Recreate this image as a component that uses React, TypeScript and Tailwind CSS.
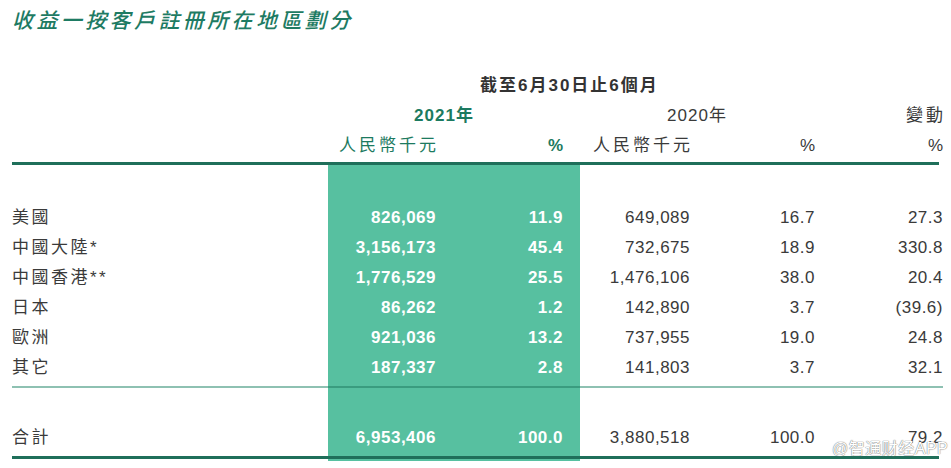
import React from "react";

const GRID = "grid grid-cols-[316px_122px_130px_125px_125px_113px]";
const FONT = "font-['Liberation_Sans','Noto_Sans_CJK_TC',sans-serif]";

type R = { label: string; a: string; b: string; c: string; d: string; e: string };

const rows: R[] = [
  { label: "美國", a: "826,069", b: "11.9", c: "649,089", d: "16.7", e: "27.3" },
  { label: "中國大陸*", a: "3,156,173", b: "45.4", c: "732,675", d: "18.9", e: "330.8" },
  { label: "中國香港**", a: "1,776,529", b: "25.5", c: "1,476,106", d: "38.0", e: "20.4" },
  { label: "日本", a: "86,262", b: "1.2", c: "142,890", d: "3.7", e: "(39.6)" },
  { label: "歐洲", a: "921,036", b: "13.2", c: "737,955", d: "19.0", e: "24.8" },
  { label: "其它", a: "187,337", b: "2.8", c: "141,803", d: "3.7", e: "32.1" },
];

function Spacer({ h }: { h: string }) {
  return (
    <div className={`${GRID} ${h}`}>
      <div />
      <div className="bg-[#57c0a0]" />
      <div className="bg-[#57c0a0]" />
      <div />
      <div />
      <div />
    </div>
  );
}

function DataRow({ r }: { r: R }) {
  return (
    <div className={`${GRID} h-[30px] text-[17px] tracking-[0.5px] text-[#3a3a3a]`}>
      <div className="flex items-center text-[17px] tracking-[2.5px]">{r.label}</div>
      <div className="flex items-center justify-end pr-[14px] bg-[#57c0a0] text-white font-bold">{r.a}</div>
      <div className="flex items-center justify-end pr-[17px] bg-[#57c0a0] text-white font-bold">{r.b}</div>
      <div className="flex items-center justify-end pr-[15px]">{r.c}</div>
      <div className="flex items-center justify-end pr-[15px]">{r.d}</div>
      <div className="flex items-center justify-end">{r.e}</div>
    </div>
  );
}

export default function App() {
  return (
    <div className={`relative w-[951px] h-[468px] bg-white overflow-hidden ${FONT}`}>
      <div className="px-[12px]">
        <div className="h-[71px] pt-[9px]">
          <h1 className="text-[21px] leading-[24px] italic font-medium tracking-[3.4px] text-[#1e7b63]">
            收益一按客戶註冊所在地區劃分
          </h1>
        </div>

        <div className={`${GRID} h-[30px] items-center`}>
          <div />
          <div className="col-span-5 pl-[152px] text-[17px] font-bold tracking-[2px] text-[#333]">
            截至6月30日止6個月
          </div>
        </div>

        <div className={`${GRID} h-[30px] items-center text-[17px]`}>
          <div />
          <div className="col-span-2 text-center pr-[20px] font-bold text-[#1c7a60] tracking-[1px]">2021年</div>
          <div className="col-span-2 text-center pr-[16px] text-[#3a3a3a] tracking-[1px]">2020年</div>
          <div className="text-right text-[#3a3a3a] tracking-[3px] mr-[-3px]">變動</div>
        </div>

        <div className={`${GRID} h-[30px] items-center text-[17px]`}>
          <div />
          <div className="text-right pr-[11px] tracking-[3px] text-[#1c7a60]">人民幣千元</div>
          <div className="text-right pr-[17px] font-bold text-[#1c7a60]">%</div>
          <div className="text-right pr-[12px] tracking-[3px] text-[#3a3a3a]">人民幣千元</div>
          <div className="text-right pr-[15px] text-[#3a3a3a]">%</div>
          <div className="text-right text-[#3a3a3a]">%</div>
        </div>

        <div className="h-[1px]" />
        <div className="h-[3px] bg-[#1f6f5a]" />

        <Spacer h="h-[38px]" />
        {rows.map((r) => (
          <DataRow key={r.label} r={r} />
        ))}
        <Spacer h="h-[3px]" />
        <div className={`${GRID} h-[2px]`}>
          <div className="bg-[#8ec1b2]" />
          <div className="bg-[#3a9c7f]" />
          <div className="bg-[#3a9c7f]" />
          <div className="bg-[#8ec1b2]" />
          <div className="bg-[#8ec1b2]" />
          <div className="bg-[#8ec1b2]" />
        </div>
        <Spacer h="h-[35px]" />
        <DataRow r={{ label: "合計", a: "6,953,406", b: "100.0", c: "3,880,518", d: "100.0", e: "79.2" }} />
        <Spacer h="h-[3px]" />
        <div className="h-[3px] bg-[#1f6f5a]" />
        <Spacer h="h-[2px]" />
      </div>

      <div className="absolute left-[832px] top-[437px] text-[16px] tracking-[0.5px] text-white font-['Liberation_Sans','Noto_Sans_CJK_SC',sans-serif] [text-shadow:0_0_1px_#777,0_0_1px_#777]">
        @智通财经APP
      </div>
    </div>
  );
}
